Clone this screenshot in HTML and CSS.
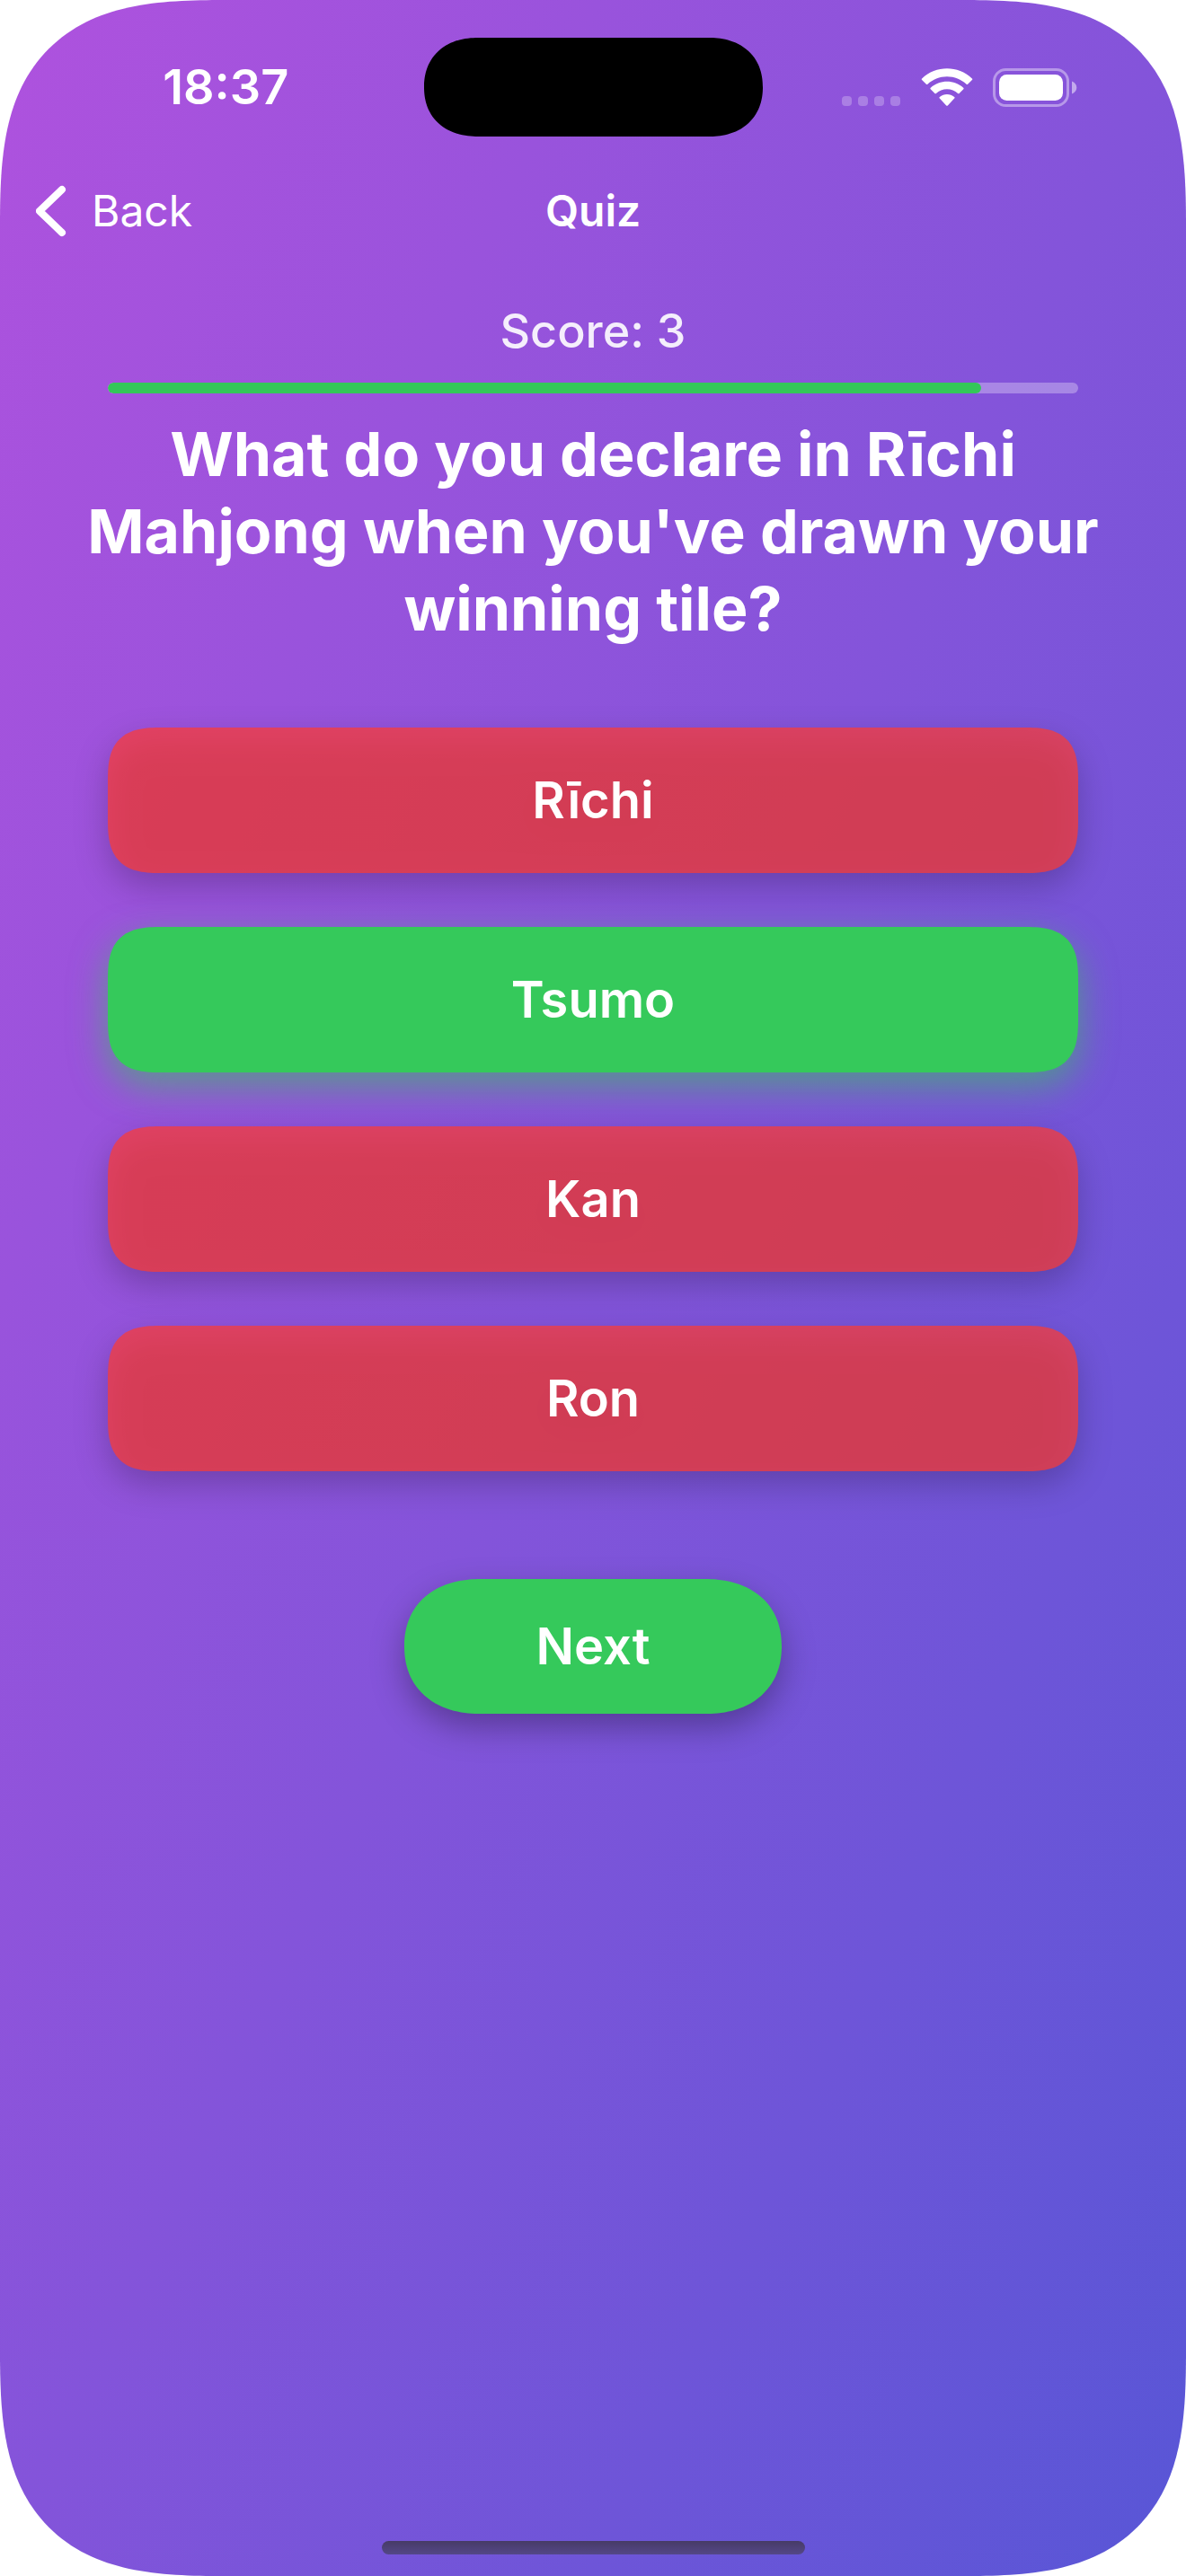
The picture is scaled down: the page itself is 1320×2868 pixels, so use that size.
FILE: index.html
```html
<!DOCTYPE html>
<html lang="en">
<head>
<meta charset="utf-8">
<meta name="viewport" content="width=device-width, initial-scale=1">
<title>Quiz</title>
<link rel="stylesheet" href="styles.css">
</head>
<body>
<div class="screen">
  <header class="status-bar">
    <time class="clock">18:37</time>
    <div class="island"></div>
    <div class="indicators">
      <svg class="signal" width="66" height="43" viewBox="0 0 66 43" fill="#fff" fill-opacity="0.25" aria-hidden="true">
        <rect x="0" y="31" width="11" height="11" rx="4"/>
        <rect x="18" y="31" width="11" height="11" rx="4"/>
        <rect x="36" y="31" width="11" height="11" rx="4"/>
        <rect x="54" y="31" width="11" height="11" rx="4"/>
      </svg>
      <svg class="wifi" width="58" height="43" viewBox="0 0 58 43" fill="#fff" aria-hidden="true">
        <path d="M29 9.200C37.300 9.200 44.900 12.400 50.600 17.700C51.100 18.100 51.700 18.100 52.100 17.700L56.900 13C57.400 12.500 57.400 11.800 56.900 11.400C41.300-3.500 16.700-3.500 1.100 11.400C.6 11.800.6 12.500 1.100 13L5.900 17.700C6.300 18.100 6.900 18.100 7.400 17.700C13.100 12.400 20.700 9.200 29 9.200Z"/>
        <path d="M29 23.300C33.600 23.300 37.900 25 41.100 28C41.600 28.400 42.200 28.400 42.600 28L47.300 23.200C47.700 22.800 47.700 22.100 47.200 21.700C37 12.400 21 12.400 10.800 21.700C10.300 22.100 10.300 22.800 10.700 23.200L15.400 28C15.800 28.400 16.400 28.400 16.900 28C20.100 25 24.400 23.300 29 23.300Z"/>
        <path d="M37.200 33.500C37.700 33.100 37.700 32.400 37.200 32C32.500 28 25.500 28 20.800 32C20.300 32.400 20.300 33.100 20.800 33.500L28.200 41.500C28.600 41.900 29.400 41.900 29.800 41.500Z"/>
      </svg>
      <svg class="battery" width="94" height="43" viewBox="0 0 94 43" aria-hidden="true">
        <rect x="1.500" y="1.500" width="82" height="40" rx="13" fill="none" stroke="#fff" stroke-opacity="0.400" stroke-width="3"/>
        <rect x="7" y="7" width="71" height="29" rx="8.500" fill="#fff"/>
        <path d="M88 14.500C91.500 16 93.300 18.500 93.300 21.500S91.500 27 88 28.500Z" fill="#fff" fill-opacity="0.500"/>
      </svg>
    </div>
  </header>

  <nav class="nav-bar">
    <a class="back" href="#">
      <svg width="34" height="58" viewBox="0 0 34 58" fill="none" stroke="#fff" stroke-width="8" stroke-linecap="round" stroke-linejoin="round" aria-hidden="true">
        <path d="M29 5L4 29L29 53"/>
      </svg>
      <span>Back</span>
    </a>
    <h1 class="nav-title">Quiz</h1>
  </nav>

  <main class="quiz">
    <label class="score" for="quiz-progress">Score: 3</label>
    <progress class="progress" id="quiz-progress" value="90" max="100"></progress>
    <h2 class="question">What do you declare in Rīchi Mahjong when you've drawn your winning tile?</h2>
    <div class="answers">
      <button class="answer wrong" type="button">Rīchi</button>
      <button class="answer correct" type="button">Tsumo</button>
      <button class="answer wrong" type="button">Kan</button>
      <button class="answer wrong" type="button">Ron</button>
    </div>
    <button class="next" type="button">Next</button>
  </main>

  <div class="home-indicator"></div>
</div>
</body>
</html>
```

FILE: styles.css
```css
* {
  box-sizing: border-box;
}

body {
  margin: 0;
  background: #fff;
  color: #fff;
  font-family: Inter, "Liberation Sans", sans-serif;
}

h1,
h2 {
  margin: 0;
}

button {
  border: 0;
  padding: 0;
  color: inherit;
  font-family: inherit;
}

.screen {
  display: flex;
  flex-direction: column;
  min-height: 100vh;
  padding-bottom: 24px;
  background: linear-gradient(to bottom right, #af52de, #5856d6);
  border-radius: 195px;
}

/* Status bar */
.status-bar {
  display: grid;
  grid-template-columns: 1fr 377px 1fr;
  align-items: center;
  padding-top: 42px;
}

.clock {
  padding-left: 31px;
  text-align: center;
  font-size: 54px;
  font-weight: 600;
  line-height: 64px;
}

.island {
  height: 110px;
  border-radius: 55px;
  background: #000;
}

.indicators {
  display: flex;
  justify-content: flex-end;
  gap: 22px;
  padding-right: 121px;
}

/* Navigation bar */
.nav-bar {
  display: grid;
  grid-template-columns: 1fr auto 1fr;
  align-items: center;
  height: 166px;
  padding: 0 40px;
}

.back {
  display: flex;
  align-items: center;
  gap: 28px;
  color: inherit;
  font-size: 48px;
  line-height: 64px;
  text-decoration: none;
}

.nav-title {
  font-size: 48px;
  font-weight: 600;
  line-height: 64px;
}

/* Quiz */
.quiz {
  display: flex;
  flex-direction: column;
  align-items: center;
  padding: 18px 60px 60px;
}

.score {
  color: rgba(255, 255, 255, 0.9);
  font-size: 52px;
  font-weight: 500;
  line-height: 66px;
}

.progress {
  appearance: none;
  width: calc(100% - 120px);
  height: 12px;
  margin: 24px 0;
  border: 0;
  border-radius: 6px;
  background: rgba(255, 255, 255, 0.3);
  overflow: hidden;
}

.progress::-webkit-progress-bar {
  background: transparent;
}

.progress::-webkit-progress-value {
  border-radius: 6px;
  background: #34c759;
}

.question {
  font-size: 68px;
  font-weight: 700;
  line-height: 86px;
  text-align: center;
}

.answers {
  display: grid;
  gap: 60px;
  width: calc(100% - 120px);
  margin-top: 90px;
}

.answer,
.next {
  font-size: 56px;
  font-weight: 600;
  line-height: 72px;
  filter: drop-shadow(0 15px 18px rgba(0, 0, 0, 0.3));
}

.answer {
  height: 162px;
  border-radius: 50px;
}

.wrong {
  background: rgba(255, 59, 48, 0.7);
}

.correct {
  background: #35c95b;
  filter: drop-shadow(0 15px 20px rgba(52, 199, 89, 0.6));
}

.next {
  width: 420px;
  height: 150px;
  margin-top: 120px;
  border-radius: 75px;
  background: #35c95b;
}

.home-indicator {
  width: 471px;
  height: 15px;
  margin: auto auto 0;
  border-radius: 8px;
  background: linear-gradient(#473b66, #544788);
}

/* Continuous corners: a longer radius with a flatter curve */
@supports (corner-shape: superellipse(1.5)) {
  .screen {
    border-radius: 250px;
    corner-shape: superellipse(1.5);
  }

  .answer {
    border-radius: 60px;
    corner-shape: superellipse(1.5);
  }

  .next {
    border-radius: 85px / 75px;
    corner-shape: superellipse(1.15);
  }

  .island {
    border-radius: 60px / 55px;
    corner-shape: superellipse(1.15);
  }
}
```
